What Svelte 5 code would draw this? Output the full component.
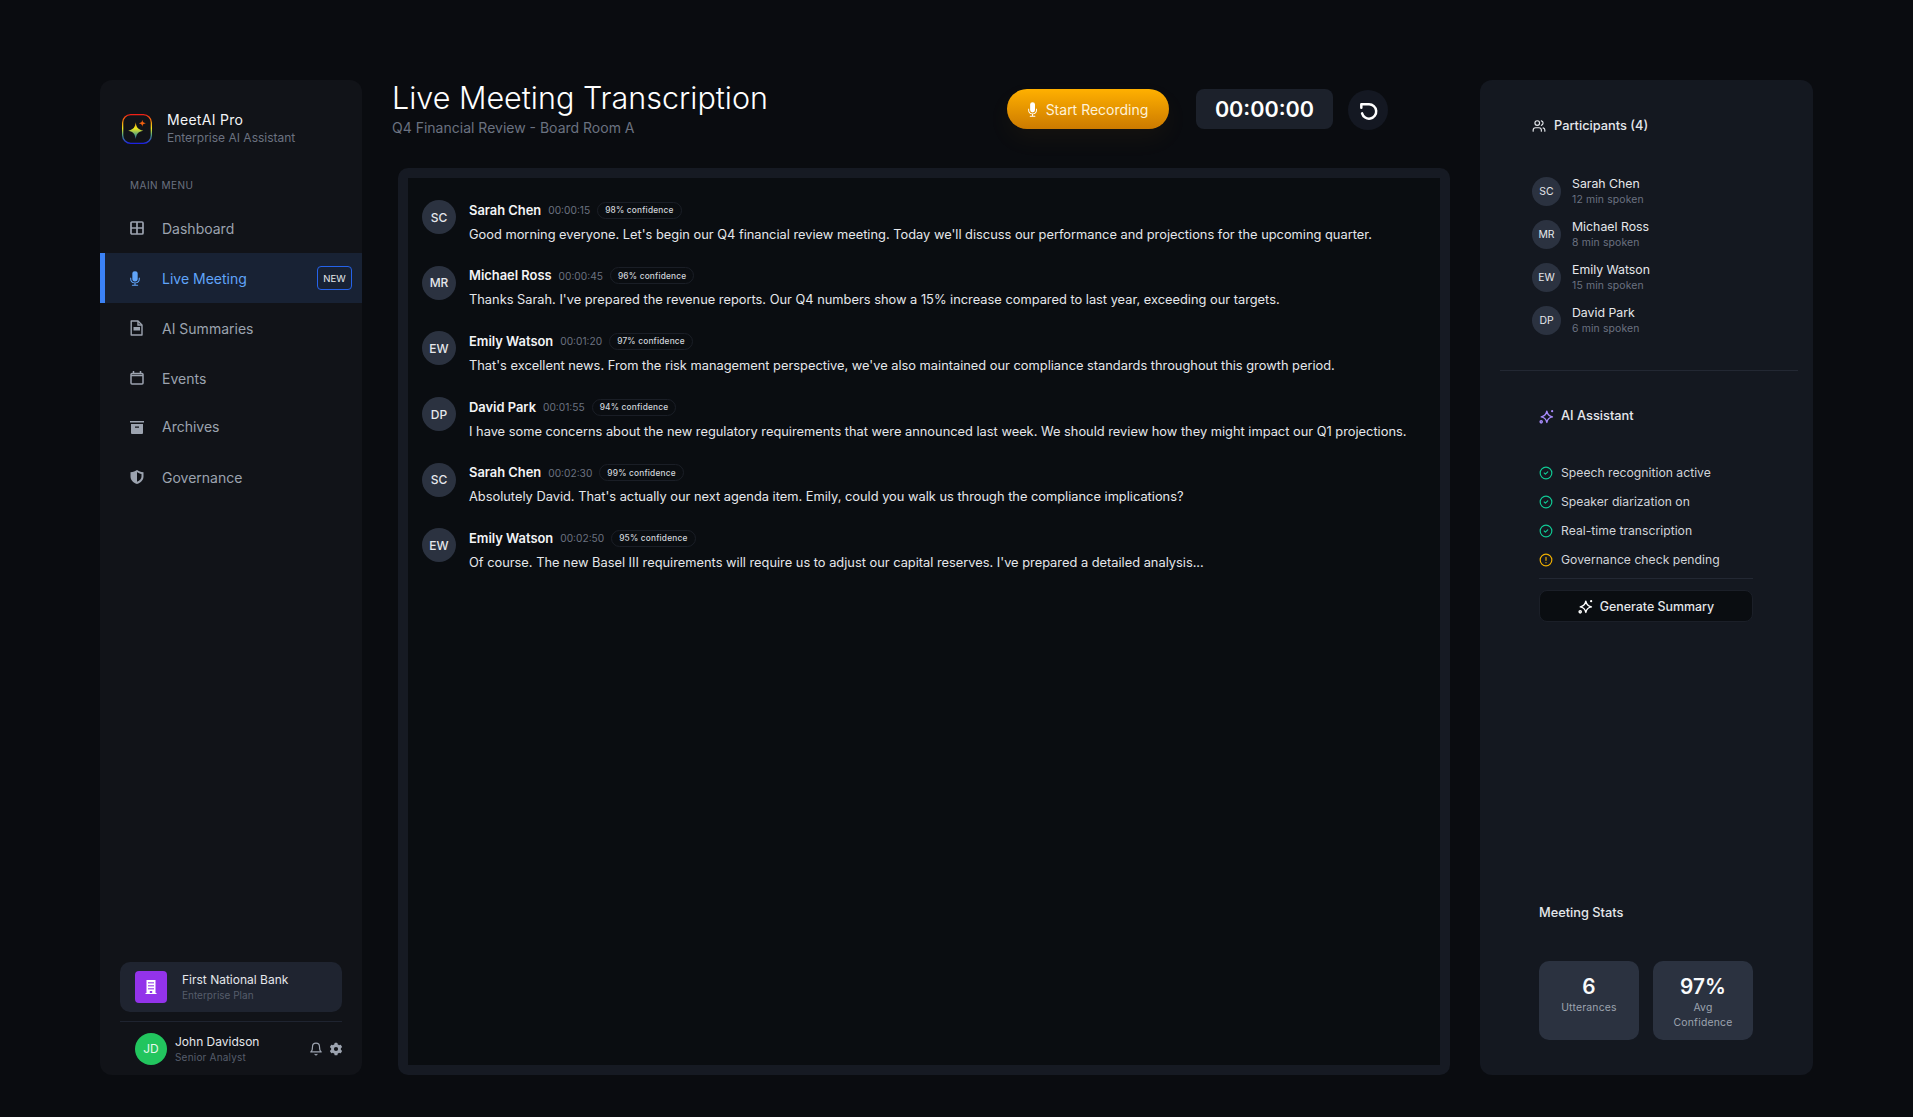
<script>
	const transcript = [
		{ av: 'SC', name: 'Sarah Chen', time: '00:00:15', conf: 98, text: "Good morning everyone. Let's begin our Q4 financial review meeting. Today we'll discuss our performance and projections for the upcoming quarter." },
		{ av: 'MR', name: 'Michael Ross', time: '00:00:45', conf: 96, text: "Thanks Sarah. I've prepared the revenue reports. Our Q4 numbers show a 15% increase compared to last year, exceeding our targets." },
		{ av: 'EW', name: 'Emily Watson', time: '00:01:20', conf: 97, text: "That's excellent news. From the risk management perspective, we've also maintained our compliance standards throughout this growth period." },
		{ av: 'DP', name: 'David Park', time: '00:01:55', conf: 94, text: 'I have some concerns about the new regulatory requirements that were announced last week. We should review how they might impact our Q1 projections.' },
		{ av: 'SC', name: 'Sarah Chen', time: '00:02:30', conf: 99, text: "Absolutely David. That's actually our next agenda item. Emily, could you walk us through the compliance implications?" },
		{ av: 'EW', name: 'Emily Watson', time: '00:02:50', conf: 95, text: "Of course. The new Basel III requirements will require us to adjust our capital reserves. I've prepared a detailed analysis..." }
	];

	const participants = [
		{ av: 'SC', name: 'Sarah Chen', mins: 12 },
		{ av: 'MR', name: 'Michael Ross', mins: 8 },
		{ av: 'EW', name: 'Emily Watson', mins: 15 },
		{ av: 'DP', name: 'David Park', mins: 6 }
	];

	const statuses = [
		{ label: 'Speech recognition active', ok: true },
		{ label: 'Speaker diarization on', ok: true },
		{ label: 'Real-time transcription', ok: true },
		{ label: 'Governance check pending', ok: false }
	];
</script>

{#snippet micIcon()}
	<svg viewBox="5 0.5 14 23" preserveAspectRatio="none" fill="currentColor">
		<path d="M8.25 4.5a3.75 3.75 0 1 1 7.5 0v8.25a3.75 3.75 0 1 1-7.5 0V4.5Z" />
		<path d="M6 10.5a.75.75 0 0 1 .75.75v1.5a5.25 5.25 0 1 0 10.5 0v-1.5a.75.75 0 0 1 1.5 0v1.5a6.751 6.751 0 0 1-6 6.709v2.291h3a.75.75 0 0 1 0 1.5h-7.5a.75.75 0 0 1 0-1.5h3v-2.291a6.751 6.751 0 0 1-6-6.709v-1.5A.75.75 0 0 1 6 10.5Z" />
	</svg>
{/snippet}

{#snippet sparkIcon()}
	<svg viewBox="0 0 24 24" fill="none" stroke="currentColor" stroke-width="2.2" stroke-linecap="round" stroke-linejoin="round">
		<path d="M12.5 3.5c1 5 3 8 9 9-6 1-8 4-9 9-1-5-3-8-9-9 6-1 8-4 9-9Z" />
		<circle cx="21" cy="3.5" r="1.8" fill="currentColor" stroke="none" />
		<circle cx="3.5" cy="20.5" r="1.8" />
	</svg>
{/snippet}

<div class="page">
	<aside class="sidebar">
		<div class="brand">
			<svg class="logo" viewBox="0 0 30 30" fill="none">
				<defs>
					<linearGradient id="rainbow" x1="0" y1="0" x2="0" y2="30" gradientUnits="userSpaceOnUse">
						<stop offset="0" stop-color="#f01818" />
						<stop offset="0.25" stop-color="#f58a0b" />
						<stop offset="0.48" stop-color="#eee820" />
						<stop offset="0.7" stop-color="#4fa080" />
						<stop offset="1" stop-color="#1a1ae8" />
					</linearGradient>
				</defs>
				<rect x="0.65" y="0.65" width="28.7" height="28.7" rx="8" stroke="url(#rainbow)" stroke-width="1.3" />
				<path d="M13.7 8.3c.6 4.8 2.2 7.4 7.5 8.4-5.3 1-6.9 3.6-7.5 8.3-.6-4.7-2.2-7.3-7.5-8.3 5.3-1 6.9-3.6 7.5-8.4Z" fill="url(#rainbow)" />
				<path d="M20.3 5.8c.3 2.2 1.1 3 3.5 3.5-2.4.5-3.2 1.3-3.5 3.5-.3-2.2-1.1-3-3.5-3.5 2.4-.5 3.2-1.3 3.5-3.5Z" fill="#f2600f" />
			</svg>
			<div>
				<div class="brand-name">MeetAI Pro</div>
				<div class="brand-sub">Enterprise AI Assistant</div>
			</div>
		</div>

		<div class="menu-label">MAIN MENU</div>

		<nav class="nav">
			<div class="nav-item">
				<svg class="nav-icon" viewBox="0 0 14 14" fill="none" stroke="currentColor" stroke-width="1.7">
					<rect x="1" y="1" width="12" height="12" rx="1" /><path d="M7 1v12M1 7h12" />
				</svg>
				<span>Dashboard</span>
			</div>
			<div class="nav-item active">
				<span class="nav-icon mic">{@render micIcon()}</span>
				<span>Live Meeting</span>
				<span class="new">NEW</span>
			</div>
			<div class="nav-item">
				<svg class="nav-icon doc" viewBox="0 0 14 16" fill="none" stroke="currentColor" stroke-width="1.4">
					<path d="M1.2 1H8l4 4v10H1.2z" stroke-linejoin="round" /><path d="M8 1v4h4" />
					<rect x="3.5" y="7" width="6.5" height="3.5" fill="currentColor" stroke="none" />
				</svg>
				<span>AI Summaries</span>
			</div>
			<div class="nav-item">
				<svg class="nav-icon" viewBox="0 0 14 14" fill="none" stroke="currentColor" stroke-width="1.5">
					<rect x="1" y="2.5" width="12" height="10.5" rx="1" /><path d="M3.5 0v3M10.5 0v3M1 4.5h12" />
				</svg>
				<span>Events</span>
			</div>
			<div class="nav-item short">
				<svg class="nav-icon" viewBox="0 0 14 14" fill="currentColor">
					<rect x="0" y="1" width="14" height="1.5" />
					<path fill-rule="evenodd" d="M1 4h12v9a1 1 0 0 1-1 1H2a1 1 0 0 1-1-1V4Zm4 2.5v1.2h4V6.5H5Z" />
				</svg>
				<span>Archives</span>
			</div>
			<div class="nav-item tall">
				<svg class="nav-icon" viewBox="0 0 14 14">
					<path fill-rule="evenodd" fill="currentColor" d="M7 0c1.7 1.3 3.8 2 6.5 2.2v4.3c0 3.4-2.5 6.1-6.5 7.500-4-1.400-6.500-4.100-6.500-7.500V2.200C3.200 2 5.300 1.300 7 0Zm0 2v9.800c2.900-1.200 4.500-3.100 4.500-5.300V3.900C9.900 3.700 8.300 3 7 2Z" />
				</svg>
				<span>Governance</span>
			</div>
		</nav>

		<div class="org">
			<div class="org-icon">
				<svg viewBox="0 0 14 14" fill="#fff">
					<path fill-rule="evenodd" d="M2.5 0h9v13h1v1h-11v-1h1V0Zm1.8 2v1.5h1.4V2H4.300Zm2 0v1.500h1.400V2H6.300Zm2 0v1.500h1.400V2H8.300Zm-4 3v1.500h1.400V5H4.300Zm2 0v1.500h1.400V5H6.300Zm2 0v1.500h1.400V5H8.300Zm-4 3v1.500h1.400V8H4.300Zm2 0v1.500h1.400V8H6.300Zm2 0v1.500h1.400V8H8.300Zm-2.500 3v2h2.400v-2H5.800Z" />
				</svg>
			</div>
			<div>
				<div class="org-name">First National Bank</div>
				<div class="org-plan">Enterprise Plan</div>
			</div>
		</div>

		<div class="user">
			<div class="user-av">JD</div>
			<div class="user-info">
				<div class="user-name">John Davidson</div>
				<div class="user-role">Senior Analyst</div>
			</div>
			<svg class="user-btn" viewBox="0 0 24 24" fill="none" stroke="currentColor" stroke-width="2" stroke-linecap="round" stroke-linejoin="round">
				<path d="M6 8a6 6 0 0 1 12 0c0 7 3 9 3 9H3s3-2 3-9" /><path d="M10.3 21a1.94 1.94 0 0 0 3.4 0" />
			</svg>
			<svg class="user-btn gear" viewBox="0 0 20 20" fill="currentColor">
				<path fill-rule="evenodd" d="M7.84 1.804A1 1 0 0 1 8.82 1h2.36a1 1 0 0 1 .98.804l.331 1.652a6.993 6.993 0 0 1 1.929 1.115l1.598-.54a1 1 0 0 1 1.186.447l1.18 2.044a1 1 0 0 1-.205 1.251l-1.267 1.113a7.047 7.047 0 0 1 0 2.228l1.267 1.113a1 1 0 0 1 .206 1.25l-1.18 2.045a1 1 0 0 1-1.187.447l-1.598-.54a6.993 6.993 0 0 1-1.929 1.115l-.33 1.652a1 1 0 0 1-.98.804H8.82a1 1 0 0 1-.98-.804l-.331-1.652a6.993 6.993 0 0 1-1.929-1.115l-1.598.54a1 1 0 0 1-1.186-.447l-1.18-2.044a1 1 0 0 1 .205-1.251l1.267-1.114a7.05 7.05 0 0 1 0-2.227L1.821 7.773a1 1 0 0 1-.206-1.25l1.18-2.045a1 1 0 0 1 1.187-.447l1.598.54A6.992 6.992 0 0 1 7.51 3.456l.33-1.652ZM10 13a3 3 0 1 0 0-6 3 3 0 0 0 0 6Z" />
			</svg>
		</div>
	</aside>

	<main class="main">
		<header class="header">
			<div class="titles">
				<h1>Live Meeting Transcription</h1>
				<p>Q4 Financial Review - Board Room A</p>
			</div>
			<button class="record"><span class="record-icon">{@render micIcon()}</span>Start Recording</button>
			<div class="timer">00:00:00</div>
			<button class="reset" aria-label="Reset">
				<svg viewBox="0 -1 24 24" fill="none" stroke="currentColor" stroke-width="2.6" stroke-linecap="round" stroke-linejoin="round">
					<path d="M4.5 8.2V4.5H12.500A7.5 7.5 0 1 1 5.3 14" />
				</svg>
			</button>
		</header>

		<section class="panel">
			<div class="panel-inner">
				{#each transcript as line}
					<div class="line">
						<div class="avatar">{line.av}</div>
						<div class="line-body">
							<div class="line-head">
								<span class="speaker">{line.name}</span>
								<span class="time">{line.time}</span>
								<span class="conf">{line.conf}% confidence</span>
							</div>
							<div class="line-text">{line.text}</div>
						</div>
					</div>
				{/each}
			</div>
		</section>
	</main>

	<aside class="right">
		<div class="people">
			<div class="people-title">
				<svg viewBox="0 0 24 24" fill="none" stroke="currentColor" stroke-width="2" stroke-linecap="round" stroke-linejoin="round">
					<path d="M16 21v-2a4 4 0 0 0-4-4H6a4 4 0 0 0-4 4v2" /><circle cx="9" cy="7" r="4" /><path d="M22 21v-2a4 4 0 0 0-3-3.87" /><path d="M16 3.13a4 4 0 0 1 0 7.75" />
				</svg>
				Participants (4)
			</div>
			<div class="people-list">
				{#each participants as p}
					<div class="person">
						<div class="person-av">{p.av}</div>
						<div class="person-info">
							<div class="person-name">{p.name}</div>
							<div class="person-sub">{p.mins} min spoken</div>
						</div>
					</div>
				{/each}
			</div>
		</div>

		<div class="assistant">
			<div class="assistant-title"><span class="spark">{@render sparkIcon()}</span>AI Assistant</div>
			<div class="status-list">
				{#each statuses as s}
					<div class="status">
						{#if s.ok}
							<svg class="ok" viewBox="0 0 24 24" fill="none" stroke="currentColor" stroke-width="2" stroke-linecap="round" stroke-linejoin="round"><circle cx="12" cy="12" r="10" /><path d="m9 12 2 2 4-4" /></svg>
						{:else}
							<svg class="warn" viewBox="0 0 24 24" fill="none" stroke="currentColor" stroke-width="2" stroke-linecap="round" stroke-linejoin="round"><circle cx="12" cy="12" r="10" /><path d="M12 7.5v5M12 16.5h.01" /></svg>
						{/if}
						{s.label}
					</div>
				{/each}
			</div>
			<button class="generate"><span class="gen-icon">{@render sparkIcon()}</span>Generate Summary</button>
		</div>

		<div class="stats">
			<div class="stats-title">Meeting Stats</div>
			<div class="stat-grid">
				<div class="stat"><div class="stat-value">6</div><div class="stat-label">Utterances</div></div>
				<div class="stat"><div class="stat-value">97%</div><div class="stat-label">Avg Confidence</div></div>
			</div>
		</div>
	</aside>
</div>

<style>
	:global(body) {
		margin: 0;
		background: #0a0c10;
		font-family: Inter, 'Liberation Sans', sans-serif;
		color: #fff;
	}

	.page {
		box-sizing: border-box;
		height: 1117px;
		padding: 80px 100px 42px;
		display: flex;
		overflow: hidden;
	}

	/* Sidebar */

	.sidebar {
		width: 262px;
		flex-shrink: 0;
		background: #111318;
		border-radius: 12px;
		display: flex;
		flex-direction: column;
	}

	.brand {
		display: flex;
		align-items: center;
		gap: 15px;
		padding: 31px 22px 0;
	}

	.logo {
		width: 30px;
		height: 30px;
		flex-shrink: 0;
	}

	.brand-name {
		font-size: 14px;
		line-height: 18px;
		letter-spacing: 0.3px;
		color: #f3f4f6;
	}

	.brand-sub {
		font-size: 12px;
		line-height: 17px;
		color: #6b7280;
	}

	.menu-label {
		margin: 31px 0 0 30px;
		font-size: 10px;
		line-height: 16px;
		letter-spacing: 0.5px;
		color: #6b7280;
	}

	.nav {
		margin-top: 10px;
	}

	.nav-item {
		height: 50px;
		display: flex;
		align-items: center;
		gap: 18px;
		padding-left: 30px;
		font-size: 14px;
		color: #9ca3af;
	}

	.nav-item.short {
		height: 47px;
	}

	.nav-item.tall {
		height: 54px;
	}

	.nav-item.active {
		background: #182234;
		color: #60a5fa;
		box-shadow: inset 5px 0 0 #3b82f6;
	}

	.nav-icon {
		width: 14px;
		height: 14px;
		flex-shrink: 0;
	}

	.doc {
		height: 16px;
	}

	.mic {
		display: flex;
		justify-content: flex-start;
		height: 15px;
	}

	.mic :global(svg) {
		width: 10px;
		height: 15px;
	}

	.new {
		margin-left: auto;
		margin-right: 10px;
		border: 1px solid #2563eb;
		border-radius: 4px;
		width: 35px;
		height: 24px;
		box-sizing: border-box;
		display: flex;
		align-items: center;
		justify-content: center;
		font-size: 9.6px;
		color: #e5e7eb;
	}

	.org {
		margin: auto 20px 0;
		height: 50px;
		background: #1f2430;
		border-radius: 10px;
		display: flex;
		align-items: center;
		gap: 15px;
		padding-left: 15px;
	}

	.org-icon {
		width: 32px;
		height: 32px;
		background: #9333ea;
		border-radius: 4px;
		display: flex;
		align-items: center;
		justify-content: center;
	}

	.org-icon svg {
		width: 14px;
		height: 14px;
	}

	.org-name {
		font-size: 12px;
		line-height: 16px;
		color: #e5e7eb;
	}

	.org-plan {
		font-size: 10px;
		line-height: 14px;
		color: #565d6b;
	}

	.user {
		margin: 9px 20px 0;
		height: 54px;
		box-sizing: border-box;
		border-top: 1px solid #1f2430;
		display: flex;
		align-items: center;
		gap: 8px;
		padding-left: 15px;
	}

	.user-av {
		width: 32px;
		height: 32px;
		border-radius: 50%;
		background: #22c55e;
		display: flex;
		align-items: center;
		justify-content: center;
		font-size: 12px;
		color: #e6f9ee;
	}

	.user-info {
		flex: 1;
	}

	.user-name {
		font-size: 12px;
		line-height: 16px;
		color: #e5e7eb;
	}

	.user-role {
		font-size: 10px;
		line-height: 14px;
		letter-spacing: 0.2px;
		color: #565d6b;
	}

	.user-btn {
		width: 14px;
		height: 14px;
		color: #9ca3af;
		margin-left: -2px;
	}

	.gear {
		margin-right: -1px;
	}

	/* Main */

	.main {
		flex: 1;
		min-width: 0;
		margin: 0 30px;
		display: flex;
		flex-direction: column;
	}

	.header {
		height: 88px;
		flex-shrink: 0;
		display: flex;
		align-items: flex-start;
	}

	.titles {
		flex: 1;
	}

	h1 {
		margin: 0;
		font-size: 30.5px;
		line-height: 36px;
		font-weight: 300;
		color: #fff;
	}

	.titles p {
		margin: 3px 0 0;
		font-size: 14px;
		line-height: 18px;
		color: #6b7280;
	}

	.record {
		margin-top: 9px;
		width: 162px;
		height: 40px;
		border: none;
		border-radius: 20px;
		background: linear-gradient(180deg, #ffb000, #cc7a00);
		box-shadow: 0 10px 24px rgba(245, 158, 11, 0.05);
		display: flex;
		align-items: center;
		justify-content: center;
		gap: 8px;
		color: #fff2d8;
		font: 400 14px Inter, sans-serif;
	}

	.record-icon {
		display: flex;
		width: 10px;
		height: 15px;
		color: #fff;
	}

	.timer {
		margin: 9px 0 0 27px;
		width: 137px;
		height: 40px;
		background: #1c212b;
		border-radius: 8px;
		display: flex;
		align-items: center;
		justify-content: center;
		font-size: 21.6px;
		font-weight: 600;
		color: #fff;
	}

	.reset {
		margin: 10px 62px 0 15px;
		width: 40px;
		height: 40px;
		padding: 0;
		border: none;
		border-radius: 50%;
		background: #141822;
		color: #fff;
		display: flex;
		align-items: center;
		justify-content: center;
	}

	.reset svg {
		width: 23px;
		height: 23px;
	}

	.panel {
		flex: 1;
		min-height: 0;
		margin-left: 6px;
		background: #161a23;
		border-radius: 10px;
		padding: 10px;
		display: flex;
	}

	.panel-inner {
		flex: 1;
		min-width: 0;
		background: #0a0d11;
		padding: 22px 14px;
	}

	.line {
		display: flex;
		gap: 13px;
		height: 65.7px;
	}

	.avatar {
		width: 34px;
		height: 34px;
		border-radius: 50%;
		background: #2b3240;
		display: flex;
		align-items: center;
		justify-content: center;
		font-size: 12px;
		font-weight: 500;
		color: #e5e7eb;
		flex-shrink: 0;
	}

	.line-head {
		display: flex;
		align-items: center;
		gap: 7px;
		height: 20px;
	}

	.speaker {
		font-size: 12.9px;
		font-weight: 600;
		color: #f3f4f6;
	}

	.time {
		font-size: 10.2px;
		color: #6b7280;
	}

	.conf {
		border: 1px solid #1a1e26;
		border-radius: 9px;
		padding: 0 7px;
		height: 17px;
		box-sizing: border-box;
		display: flex;
		align-items: center;
		font-size: 8.3px;
		font-weight: 500;
		letter-spacing: 0.2px;
		color: #d1d5db;
	}

	.line-text {
		margin-top: 4.5px;
		font-size: 12.83px;
		line-height: 20px;
		color: #e5e7eb;
		white-space: nowrap;
	}

	/* Right panel */

	.right {
		width: 333px;
		flex-shrink: 0;
		background: #141820;
		border-radius: 12px;
		display: flex;
		flex-direction: column;
	}

	.people {
		margin: 0 15px 0 20px;
		padding: 37px 0 35px 32px;
		border-bottom: 1px solid #232833;
	}

	.people-title {
		display: flex;
		align-items: center;
		gap: 8px;
		font-size: 12.8px;
		font-weight: 500;
		line-height: 18px;
		color: #e5e7eb;
	}

	.people-title svg {
		width: 14px;
		height: 14px;
	}

	.people-list {
		margin-top: 41px;
		display: flex;
		flex-direction: column;
		gap: 13px;
	}

	.person {
		display: flex;
		align-items: center;
		gap: 11px;
		height: 30px;
	}

	.person-av {
		width: 29px;
		height: 29px;
		border-radius: 50%;
		background: #2b3240;
		display: flex;
		align-items: center;
		justify-content: center;
		font-size: 10.4px;
		color: #e5e7eb;
	}

	.person-info {
		margin-top: 2px;
	}

	.person-name {
		font-size: 12.3px;
		line-height: 16px;
		color: #e5e7eb;
	}

	.person-sub {
		font-size: 10.4px;
		line-height: 16px;
		letter-spacing: 0.15px;
		color: #6b7280;
	}

	.assistant {
		margin: 36px 60px 0 59px;
	}

	.assistant-title {
		display: flex;
		align-items: center;
		gap: 8px;
		font-size: 12.8px;
		font-weight: 500;
		line-height: 18px;
		color: #e5e7eb;
	}

	.spark {
		display: flex;
		width: 15px;
		height: 15px;
		margin-right: -1px;
		color: #a78bfa;
	}

	.status-list {
		margin-top: 33px;
		padding-bottom: 4px;
		border-bottom: 1px solid #232833;
	}

	.status {
		display: flex;
		align-items: center;
		gap: 8px;
		height: 29px;
		font-size: 12.2px;
		color: #d1d5db;
	}

	.status svg {
		width: 14px;
		height: 14px;
	}

	.ok {
		color: #10c994;
	}

	.warn {
		color: #f0b000;
	}

	.generate {
		margin-top: 11px;
		width: 100%;
		height: 32px;
		background: #0a0d11;
		border: 1px solid #1b1f28;
		border-radius: 8px;
		display: flex;
		align-items: center;
		justify-content: center;
		gap: 7px;
		color: #e5e7eb;
		font: 500 12.4px Inter, sans-serif;
	}

	.gen-icon {
		display: flex;
		width: 15px;
		height: 15px;
		color: #fff;
	}

	.stats {
		margin: auto 60px 35px 59px;
	}

	.stats-title {
		font-size: 12.8px;
		font-weight: 500;
		line-height: 18px;
		color: #e5e7eb;
	}

	.stat-grid {
		margin-top: 39px;
		display: flex;
		gap: 14px;
	}

	.stat {
		flex: 1;
		height: 79px;
		box-sizing: border-box;
		background: #2b3240;
		border-radius: 10px;
		padding: 14px 8px 0;
		text-align: center;
	}

	.stat-value {
		font-size: 20.8px;
		font-weight: 600;
		line-height: 24px;
		color: #f9fafb;
	}

	.stat-label {
		margin-top: 2px;
		font-size: 10.4px;
		line-height: 14.6px;
		letter-spacing: 0.2px;
		color: #9ca3af;
		padding: 0 10px;
	}
</style>
